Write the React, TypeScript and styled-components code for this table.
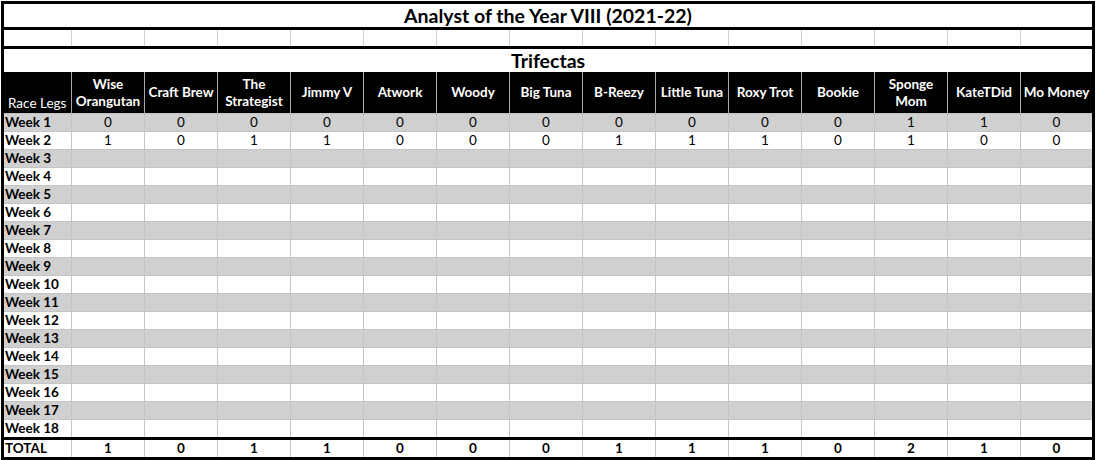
import styled, { createGlobalStyle } from "styled-components";

const GlobalStyle = createGlobalStyle`
  html, body {
    margin: 0;
    padding: 0;
    background: #ffffff;
  }
  body {
    font-family: Lato, "Open Sans", "Liberation Sans", sans-serif;
    color: #000;
  }
`;

const players = [
  ["Wise", "Orangutan"],
  ["Craft Brew"],
  ["The", "Strategist"],
  ["Jimmy V"],
  ["Atwork"],
  ["Woody"],
  ["Big Tuna"],
  ["B-Reezy"],
  ["Little Tuna"],
  ["Roxy Trot"],
  ["Bookie"],
  ["Sponge", "Mom"],
  ["KateTDid"],
  ["Mo Money"],
];

const results: Record<number, number[]> = {
  1: [0, 0, 0, 0, 0, 0, 0, 0, 0, 0, 0, 1, 1, 0],
  2: [1, 0, 1, 1, 0, 0, 0, 1, 1, 1, 0, 1, 0, 0],
};

const totals = [1, 0, 1, 1, 0, 0, 0, 1, 1, 1, 0, 2, 1, 0];

const weeks = Array.from({ length: 18 }, (_, i) => i + 1);

const Page = styled.div`
  padding: 1px 0 0 1px;
`;

const Sheet = styled.table`
  width: 1091px;
  table-layout: fixed;
  border-collapse: collapse;
  border: 3px solid #000;
  font-size: 13.5px;
`;

const Banner = styled.td`
  height: 23px;
  padding: 0;
  text-align: center;
  font-size: 19.5px;
  font-weight: 700;
  line-height: 1;
  border-bottom: 3px solid #000;
`;

const BlankCell = styled.td<{ $edge?: boolean }>`
  height: 16px;
  padding: 0;
  border-left: ${(p) => (p.$edge ? "3px solid #000" : "1px solid #d0d0d0")};
  border-bottom: 3px solid #000;
`;

const SectionTitle = styled.td`
  height: 23px;
  padding: 0;
  text-align: center;
  font-size: 19.5px;
  font-weight: 700;
  line-height: 1;
`;

const HeadRow = styled.tr`
  background: #000;
  color: #fff;
`;

const HeadCell = styled.th<{ $corner?: boolean }>`
  height: 40px;
  padding: ${(p) => (p.$corner ? "0 0 1px 4px" : "0")};
  font-weight: ${(p) => (p.$corner ? 400 : 700)};
  text-align: ${(p) => (p.$corner ? "left" : "center")};
  vertical-align: ${(p) => (p.$corner ? "bottom" : "middle")};
  line-height: 17px;
  white-space: nowrap;
  border-left: 1px solid #a6a6a6;
`;

const WeekRow = styled.tr<{ $shade: boolean }>`
  background: ${(p) => (p.$shade ? "#d0d0d0" : "#ffffff")};
`;

const Label = styled.td`
  height: 17px;
  padding: 0 0 0 1px;
  font-weight: 700;
  line-height: 17px;
  white-space: nowrap;
  border: 1px solid #c4c4c4;
  border-left: 3px solid #000;
`;

const Value = styled.td<{ $bold?: boolean }>`
  padding: 0;
  text-align: center;
  line-height: 17px;
  font-weight: ${(p) => (p.$bold ? 700 : 400)};
  border: 1px solid #c4c4c4;
`;

const TotalRow = styled.tr`
  td {
    height: 16px;
    border-top: 3px solid #000;
    border-bottom: 3px solid #000;
  }
`;

export default function App() {
  return (
    <Page>
      <GlobalStyle />
      <Sheet>
        <colgroup>
          <col style={{ width: 69 }} />
          {players.map((_, i) => (
            <col key={i} style={{ width: 73 }} />
          ))}
        </colgroup>
        <tbody>
          <tr>
            <Banner colSpan={15}>Analyst of the Year VIII (2021-22)</Banner>
          </tr>
          <tr>
            <BlankCell $edge />
            {players.map((_, i) => (
              <BlankCell key={i} />
            ))}
          </tr>
          <tr>
            <SectionTitle colSpan={15}>Trifectas</SectionTitle>
          </tr>
          <HeadRow>
            <HeadCell $corner>Race Legs</HeadCell>
            {players.map((lines, i) => (
              <HeadCell key={i}>
                {lines.map((l, j) => (
                  <div key={j}>{l}</div>
                ))}
              </HeadCell>
            ))}
          </HeadRow>
          {weeks.map((w) => (
            <WeekRow key={w} $shade={w % 2 === 1}>
              <Label>Week {w}</Label>
              {players.map((_, i) => (
                <Value key={i}>{results[w] ? results[w][i] : ""}</Value>
              ))}
            </WeekRow>
          ))}
          <TotalRow>
            <Label>TOTAL</Label>
            {totals.map((t, i) => (
              <Value key={i} $bold>
                {t}
              </Value>
            ))}
          </TotalRow>
        </tbody>
      </Sheet>
    </Page>
  );
}
